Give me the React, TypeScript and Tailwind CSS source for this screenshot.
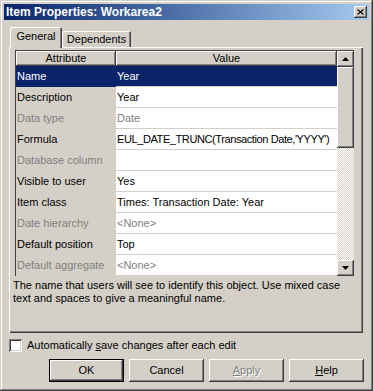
const raised =
  "shadow-[inset_-1px_-1px_#404040,inset_1px_1px_#ffffff,inset_-2px_-2px_#808080,inset_2px_2px_#d4d0c8]";
const sunken =
  "shadow-[inset_1px_1px_#808080,inset_-1px_-1px_#ffffff,inset_2px_2px_#404040,inset_-2px_-2px_#d4d0c8]";

type Row = { a: string; v: string; sel?: boolean; dis?: boolean; tight?: boolean };

const rows: Row[] = [
  { a: "Name", v: "Year", sel: true },
  { a: "Description", v: "Year" },
  { a: "Data type", v: "Date", dis: true },
  { a: "Formula", v: "EUL_DATE_TRUNC(Transaction Date,'YYYY')", tight: true },
  { a: "Database column", v: "", dis: true },
  { a: "Visible to user", v: "Yes" },
  { a: "Item class", v: "Times: Transaction Date: Year" },
  { a: "Date hierarchy", v: "<None>", dis: true },
  { a: "Default position", v: "Top" },
  { a: "Default aggregate", v: "<None>", dis: true },
];

const Arrow = ({ up }: { up?: boolean }) => (
  <svg width="7" height="4" viewBox="0 0 7 4">
    {up ? (
      <polygon points="3.5,0 7,4 0,4" fill="#000" />
    ) : (
      <polygon points="0,0 7,0 3.5,4" fill="#000" />
    )}
  </svg>
);

const Btn = ({
  children,
  def,
  dis,
}: {
  children: React.ReactNode;
  def?: boolean;
  dis?: boolean;
}) => (
  <div
    className={`w-[75px] h-[23px] flex items-center justify-center bg-[#d4d0c8] ${
      def
        ? "shadow-[inset_0_0_0_1px_#000000,inset_-2px_-2px_#404040,inset_2px_2px_#ffffff,inset_-3px_-3px_#808080]"
        : raised
    } ${dis ? "text-[#808080] [text-shadow:1px_1px_#ffffff]" : "text-black"}`}
  >
    {children}
  </div>
);

const App = () => {
  return (
    <div className="w-[373px] h-[391px] bg-[#d4d0c8] font-['Liberation_Sans',Arial,sans-serif] text-[11px] text-black leading-none select-none">
      <div className="w-full h-full p-[4px] flex flex-col shadow-[inset_-1px_-1px_#404040,inset_1px_1px_#d4d0c8,inset_-2px_-2px_#808080,inset_2px_2px_#ffffff]">
        {/* title bar */}
        <div className="h-[16px] flex items-center justify-between bg-linear-to-r from-[#0a246a] to-[#a6caf0] pl-[2px] pr-[2px]">
          <span className="text-white font-bold text-[12px]">Item Properties: Workarea2</span>
          <div className={`w-[13px] h-[12px] bg-[#d4d0c8] flex items-center justify-center ${raised}`}>
            <svg width="7" height="6" viewBox="0 0 7 6">
              <path d="M0.5 0.5 L6.5 5.5 M6.5 0.5 L0.5 5.5" stroke="#000" strokeWidth="1.2" />
            </svg>
          </div>
        </div>

        {/* tabs */}
        <div className="mt-[7px] ml-[6px] flex items-end h-[20px] relative z-10">
          <div className="h-[21px] -mb-px w-[52px] bg-[#d4d0c8] flex items-center justify-center rounded-t-[2px] shadow-[inset_1px_1px_#ffffff,inset_-1px_0_#404040,inset_-2px_0_#808080] pb-[2px]">
            General
          </div>
          <div className="h-[16px] w-[69px] bg-[#d4d0c8] flex items-center justify-center rounded-t-[2px] shadow-[inset_1px_1px_#ffffff,inset_-1px_0_#404040,inset_-2px_0_#808080]">
            Dependents
          </div>
        </div>

        {/* panel */}
        <div className="ml-[5px] mr-[6px] h-[286px] pl-[6px] pt-[3px] flex flex-col shadow-[inset_1px_1px_#ffffff,inset_-1px_-1px_#404040,inset_-2px_-2px_#808080]">
          <div className="w-[339px] h-[226px] border-l border-t border-[#404040] flex">
            <div className="w-[321px] flex flex-col">
              <div className="h-[15px] flex">
                <div className={`w-[100px] flex items-center justify-center ${raised}`}>Attribute</div>
                <div className={`w-[221px] flex items-center justify-center ${raised}`}>Value</div>
              </div>
              {rows.map((r) => (
                <div
                  key={r.a}
                  className={`h-[21px] flex ${r.sel ? "bg-[#0a246a] text-white" : ""}`}
                >
                  <div
                    className={`w-[100px] pl-[1px] flex items-center whitespace-nowrap ${
                      r.sel ? "" : "bg-[#d4d0c8]"
                    } ${r.dis ? "text-[#808080]" : ""}`}
                  >
                    {r.a}
                  </div>
                  <div
                    className={`w-[221px] pl-[1px] flex items-center whitespace-nowrap overflow-hidden border-b border-[#d4d0c8] ${
                      r.sel ? "" : "bg-white"
                    } ${r.dis ? "text-[#808080]" : ""} ${r.tight ? "tracking-[-0.4px]" : ""}`}
                  >
                    {r.v}
                  </div>
                </div>
              ))}
            </div>
            {/* scrollbar */}
            <div className="w-[17px] flex flex-col">
              <div className={`h-[16px] flex items-center justify-center bg-[#d4d0c8] ${raised}`}>
                <Arrow up />
              </div>
              <div className={`h-[81px] bg-[#d4d0c8] ${raised}`} />
              <div className="flex-1 bg-[image:repeating-conic-gradient(#ffffff_0%_25%,#d4d0c8_0%_50%)] bg-[length:2px_2px]" />
              <div className={`h-[16px] flex items-center justify-center bg-[#d4d0c8] ${raised}`}>
                <Arrow />
              </div>
            </div>
          </div>
          <p className="mt-[3px] -ml-[2px] leading-[13px] w-[340px]">
            The name that users will see to identify this object. Use mixed case text and spaces to give a meaningful name.
          </p>
        </div>

        {/* checkbox */}
        <div className="mt-[6px] ml-[5px] flex items-center gap-[5px] h-[13px]">
          <div className={`w-[13px] h-[13px] bg-white ${sunken}`} />
          <span>
            Automatically <span className="underline">s</span>ave changes after each edit
          </span>
        </div>

        {/* buttons */}
        <div className="mt-[7px] ml-[45px] flex gap-[5px]">
          <Btn def>OK</Btn>
          <Btn>Cancel</Btn>
          <Btn dis>
            <span>
              <span className="underline">A</span>pply
            </span>
          </Btn>
          <Btn>
            <span>
              <span className="underline">H</span>elp
            </span>
          </Btn>
        </div>
      </div>
    </div>
  );
};

export default App;
